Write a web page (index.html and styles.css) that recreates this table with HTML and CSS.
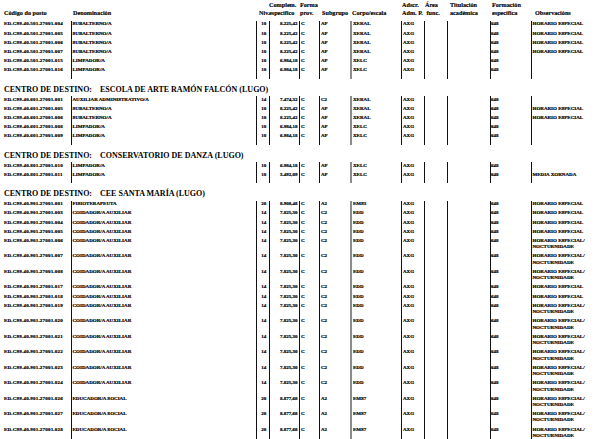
FILE: index.html
```html
<!DOCTYPE html>
<html lang="gl">
<head>
<meta charset="utf-8">
<title>RPT</title>
<link rel="stylesheet" href="styles.css">
</head>
<body>
<div class="page">
  <div class="head">
    <span>&nbsp;<br>Código do posto</span>
    <span>&nbsp;<br>Denominación</span>
    <span>&nbsp;<br>Niv.</span>
    <span>Complem.<br>específico</span>
    <span>Forma<br>prov.</span>
    <span>&nbsp;<br>Subgrupo</span>
    <span>&nbsp;<br>Corpo/escala</span>
    <span>Adscr.<br>Adm. P.</span>
    <span class="area">Área<br>&nbsp;func.</span>
    <span>Titulación<br>académica</span>
    <span>Formación<br>específica</span>
    <span>&nbsp;<br>Observacións</span>
  </div>

  <div class="group">
    <div class="row"><span>ED.C99.40.501.27001.004</span><span>SUBALTERNO/A</span><span>10</span><span>8.225,42</span><span>C</span><span>AP</span><span>XERAL</span><span>AXG</span><span></span><span></span><span>648</span><span>HORARIO ESPECIAL</span></div>
    <div class="row"><span>ED.C99.40.501.27001.005</span><span>SUBALTERNO/A</span><span>10</span><span>8.225,42</span><span>C</span><span>AP</span><span>XERAL</span><span>AXG</span><span></span><span></span><span>648</span><span>HORARIO ESPECIAL</span></div>
    <div class="row"><span>ED.C99.40.501.27001.006</span><span>SUBALTERNO/A</span><span>10</span><span>8.225,42</span><span>C</span><span>AP</span><span>XERAL</span><span>AXG</span><span></span><span></span><span>648</span><span>HORARIO ESPECIAL</span></div>
    <div class="row"><span>ED.C99.40.501.27001.007</span><span>SUBALTERNO/A</span><span>10</span><span>8.225,42</span><span>C</span><span>AP</span><span>XERAL</span><span>AXG</span><span></span><span></span><span>648</span><span>HORARIO ESPECIAL</span></div>
    <div class="row"><span>ED.C99.40.501.27001.015</span><span>LIMPADOR/A</span><span>10</span><span>6.984,18</span><span>C</span><span>AP</span><span>XELC</span><span>AXG</span><span></span><span></span><span>648</span><span></span></div>
    <div class="row"><span>ED.C99.40.501.27001.016</span><span>LIMPADOR/A</span><span>10</span><span>6.984,18</span><span>C</span><span>AP</span><span>XELC</span><span>AXG</span><span></span><span></span><span>648</span><span></span></div>
    <div class="row end"><span></span><span></span><span></span><span></span><span></span><span></span><span></span><span></span><span></span><span></span><span></span><span></span></div>
  </div>

  <div class="dest"><span class="dest-label">CENTRO DE DESTINO:</span>ESCOLA DE ARTE RAMÓN FALCÓN (LUGO)</div>
  <div class="group">
    <div class="row"><span>ED.C99.40.601.27001.001</span><span>AUXILIAR ADMINISTRATIVO/A</span><span>14</span><span>7.474,32</span><span>C</span><span>C2</span><span>XERAL</span><span>AXG</span><span></span><span></span><span>648</span><span></span></div>
    <div class="row"><span>ED.C99.40.601.27001.005</span><span>SUBALTERNO/A</span><span>10</span><span>8.225,42</span><span>C</span><span>AP</span><span>XERAL</span><span>AXG</span><span></span><span></span><span>648</span><span>HORARIO ESPECIAL</span></div>
    <div class="row"><span>ED.C99.40.601.27001.006</span><span>SUBALTERNO/A</span><span>10</span><span>8.225,42</span><span>C</span><span>AP</span><span>XERAL</span><span>AXG</span><span></span><span></span><span>648</span><span>HORARIO ESPECIAL</span></div>
    <div class="row"><span>ED.C99.40.601.27001.008</span><span>LIMPADOR/A</span><span>10</span><span>6.984,18</span><span>C</span><span>AP</span><span>XELC</span><span>AXG</span><span></span><span></span><span>648</span><span></span></div>
    <div class="row"><span>ED.C99.40.601.27001.009</span><span>LIMPADOR/A</span><span>10</span><span>6.984,18</span><span>C</span><span>AP</span><span>XELC</span><span>AXG</span><span></span><span></span><span>648</span><span></span></div>
    <div class="row end"><span></span><span></span><span></span><span></span><span></span><span></span><span></span><span></span><span></span><span></span><span></span><span></span></div>
  </div>

  <div class="dest"><span class="dest-label">CENTRO DE DESTINO:</span>CONSERVATORIO DE DANZA (LUGO)</div>
  <div class="group">
    <div class="row"><span>ED.C99.40.801.27001.010</span><span>LIMPADOR/A</span><span>10</span><span>6.984,18</span><span>C</span><span>AP</span><span>XELC</span><span>AXG</span><span></span><span></span><span>648</span><span></span></div>
    <div class="row"><span>ED.C99.40.801.27001.011</span><span>LIMPADOR/A</span><span>10</span><span>3.492,09</span><span>C</span><span>AP</span><span>XELC</span><span>AXG</span><span></span><span></span><span>648</span><span>MEDIA XORNADA</span></div>
    <div class="row end"><span></span><span></span><span></span><span></span><span></span><span></span><span></span><span></span><span></span><span></span><span></span><span></span></div>
  </div>

  <div class="dest"><span class="dest-label">CENTRO DE DESTINO:</span>CEE SANTA MARÍA (LUGO)</div>
  <div class="group">
    <div class="row"><span>ED.C99.40.901.27001.001</span><span>FISIOTERAPEUTA</span><span>20</span><span>8.908,48</span><span>C</span><span>A2</span><span>EMS3</span><span>AXG</span><span></span><span></span><span>648</span><span>HORARIO ESPECIAL</span></div>
    <div class="row"><span>ED.C99.40.901.27001.003</span><span>COIDADOR/A AUXILIAR</span><span>14</span><span>7.825,30</span><span>C</span><span>C2</span><span>EDD</span><span>AXG</span><span></span><span></span><span>648</span><span>HORARIO ESPECIAL</span></div>
    <div class="row"><span>ED.C99.40.901.27001.004</span><span>COIDADOR/A AUXILIAR</span><span>14</span><span>7.825,30</span><span>C</span><span>C2</span><span>EDD</span><span>AXG</span><span></span><span></span><span>648</span><span>HORARIO ESPECIAL</span></div>
    <div class="row"><span>ED.C99.40.901.27001.005</span><span>COIDADOR/A AUXILIAR</span><span>14</span><span>7.825,30</span><span>C</span><span>C2</span><span>EDD</span><span>AXG</span><span></span><span></span><span>648</span><span>HORARIO ESPECIAL</span></div>
    <div class="row"><span>ED.C99.40.901.27001.006</span><span>COIDADOR/A AUXILIAR</span><span>14</span><span>7.825,30</span><span>C</span><span>C2</span><span>EDD</span><span>AXG</span><span></span><span></span><span>648</span><span>HORARIO ESPECIAL/<br>NOCTURNIDADE</span></div>
    <div class="row"><span>ED.C99.40.901.27001.007</span><span>COIDADOR/A AUXILIAR</span><span>14</span><span>7.825,30</span><span>C</span><span>C2</span><span>EDD</span><span>AXG</span><span></span><span></span><span>648</span><span>HORARIO ESPECIAL/<br>NOCTURNIDADE</span></div>
    <div class="row"><span>ED.C99.40.901.27001.008</span><span>COIDADOR/A AUXILIAR</span><span>14</span><span>7.825,30</span><span>C</span><span>C2</span><span>EDD</span><span>AXG</span><span></span><span></span><span>648</span><span>HORARIO ESPECIAL/<br>NOCTURNIDADE</span></div>
    <div class="row"><span>ED.C99.40.901.27001.017</span><span>COIDADOR/A AUXILIAR</span><span>14</span><span>7.825,30</span><span>C</span><span>C2</span><span>EDD</span><span>AXG</span><span></span><span></span><span>648</span><span>HORARIO ESPECIAL</span></div>
    <div class="row"><span>ED.C99.40.901.27001.018</span><span>COIDADOR/A AUXILIAR</span><span>14</span><span>7.825,30</span><span>C</span><span>C2</span><span>EDD</span><span>AXG</span><span></span><span></span><span>648</span><span>HORARIO ESPECIAL</span></div>
    <div class="row"><span>ED.C99.40.901.27001.019</span><span>COIDADOR/A AUXILIAR</span><span>14</span><span>7.825,30</span><span>C</span><span>C2</span><span>EDD</span><span>AXG</span><span></span><span></span><span>648</span><span>HORARIO ESPECIAL/<br>NOCTURNIDADE</span></div>
    <div class="row"><span>ED.C99.40.901.27001.020</span><span>COIDADOR/A AUXILIAR</span><span>14</span><span>7.825,30</span><span>C</span><span>C2</span><span>EDD</span><span>AXG</span><span></span><span></span><span>648</span><span>HORARIO ESPECIAL/<br>NOCTURNIDADE</span></div>
    <div class="row"><span>ED.C99.40.901.27001.021</span><span>COIDADOR/A AUXILIAR</span><span>14</span><span>7.825,30</span><span>C</span><span>C2</span><span>EDD</span><span>AXG</span><span></span><span></span><span>648</span><span>HORARIO ESPECIAL/<br>NOCTURNIDADE</span></div>
    <div class="row"><span>ED.C99.40.901.27001.022</span><span>COIDADOR/A AUXILIAR</span><span>14</span><span>7.825,30</span><span>C</span><span>C2</span><span>EDD</span><span>AXG</span><span></span><span></span><span>648</span><span>HORARIO ESPECIAL/<br>NOCTURNIDADE</span></div>
    <div class="row"><span>ED.C99.40.901.27001.023</span><span>COIDADOR/A AUXILIAR</span><span>14</span><span>7.825,30</span><span>C</span><span>C2</span><span>EDD</span><span>AXG</span><span></span><span></span><span>648</span><span>HORARIO ESPECIAL/<br>NOCTURNIDADE</span></div>
    <div class="row"><span>ED.C99.40.901.27001.024</span><span>COIDADOR/A AUXILIAR</span><span>14</span><span>7.825,30</span><span>C</span><span>C2</span><span>EDD</span><span>AXG</span><span></span><span></span><span>648</span><span>HORARIO ESPECIAL/<br>NOCTURNIDADE</span></div>
    <div class="row"><span>ED.C99.40.901.27001.026</span><span>EDUCADOR/A SOCIAL</span><span>20</span><span>8.877,68</span><span>C</span><span>A2</span><span>EMS7</span><span>AXG</span><span></span><span></span><span>648</span><span>HORARIO ESPECIAL/<br>NOCTURNIDADE</span></div>
    <div class="row"><span>ED.C99.40.901.27001.027</span><span>EDUCADOR/A SOCIAL</span><span>20</span><span>8.877,68</span><span>C</span><span>A2</span><span>EMS7</span><span>AXG</span><span></span><span></span><span>648</span><span>HORARIO ESPECIAL/<br>NOCTURNIDADE</span></div>
    <div class="row"><span>ED.C99.40.901.27001.028</span><span>EDUCADOR/A SOCIAL</span><span>20</span><span>8.877,68</span><span>C</span><span>A2</span><span>EMS7</span><span>AXG</span><span></span><span></span><span>648</span><span>HORARIO ESPECIAL/<br>NOCTURNIDADE</span></div>
    <div class="row end"><span></span><span></span><span></span><span></span><span></span><span></span><span></span><span></span><span></span><span></span><span></span><span></span></div>
  </div>
</div>
</body>
</html>
```

FILE: styles.css
```css
html, body {
  margin: 0;
  padding: 0;
  background: #ffffff;
}

body {
  font-family: "Liberation Serif", "Times New Roman", serif;
  font-weight: bold;
  color: #000000;
  overflow: hidden;
}

.page {
  width: 616px;
  --cols: 71px 185px 13px 30px 20px 31px 51px 23px 23px 43px 41px 85px;
}

/* column header */
.head {
  display: grid;
  grid-template-columns: var(--cols);
  padding-top: 1.3px;
  height: 19.7px;
  font-size: 6.2px;
  line-height: 7.4px;
  white-space: nowrap;
  -webkit-text-stroke: 0.15px #000;
}
.head > span:nth-child(1) { padding-left: 4px; }
.head > span:nth-child(2) { padding-left: 2px; }
.head > span:nth-child(3) { padding-left: 3px; }
.head > span:nth-child(4) { padding-left: 0; }
.head > span:nth-child(5) { padding-left: 1px; }
.head > span:nth-child(6) { padding-left: 3px; }
.head > span:nth-child(7) { padding-left: 2px; }
.head > span:nth-child(8) { padding-left: 1px; }
.head > span:nth-child(9) { padding-left: 1px; }
.head > span:nth-child(10) { padding-left: 3px; }
.head > span:nth-child(11) { padding-left: 2px; }
.head > span:nth-child(12) { padding-left: 4px; }

/* data rows */
.row {
  display: grid;
  grid-template-columns: var(--cols);
}
.row > span {
  border-left: 1px solid #111111;
  padding: 0.5px 0 2.4px 0.5px;
  font-size: 5px;
  line-height: 6.1px;
  white-space: nowrap;
  overflow: visible;
  min-width: 0;
  -webkit-text-stroke: 0.2px #000;
}
.row > span:nth-child(1) {
  border-left: none;
  padding-left: 4px;
  letter-spacing: 0.2px;
}
.row > span:nth-child(3) { text-align: center; padding-left: 1.5px; }
.row > span:nth-child(4) { text-align: right; padding-right: 1.5px; }
.row > span:nth-child(5) { padding-left: 1px; }
.row > span:nth-child(6) { padding-left: 1px; }
.row > span:nth-child(7) {
  border-left: 2px solid #8c8c8c;
  padding-left: 1px;
}
.row > span:nth-child(8) { padding-left: 1px; }
.row > span:nth-child(11) { padding-left: 0; }
.row > span:nth-child(12) {
  padding-left: 0.5px;
  border-left-width: 1.5px;
  line-height: 6.3px;
}

.row.end > span {
  height: 3px;
  padding: 0;
}

/* destination heading */
.dest {
  height: 10px;
  line-height: 10px;
  margin: 6px 0 1.5px;
  padding-left: 4px;
  font-size: 8px;
  font-weight: bold;
  white-space: nowrap;
}
.dest-label {
  display: inline-block;
  width: 96px;
}
```
